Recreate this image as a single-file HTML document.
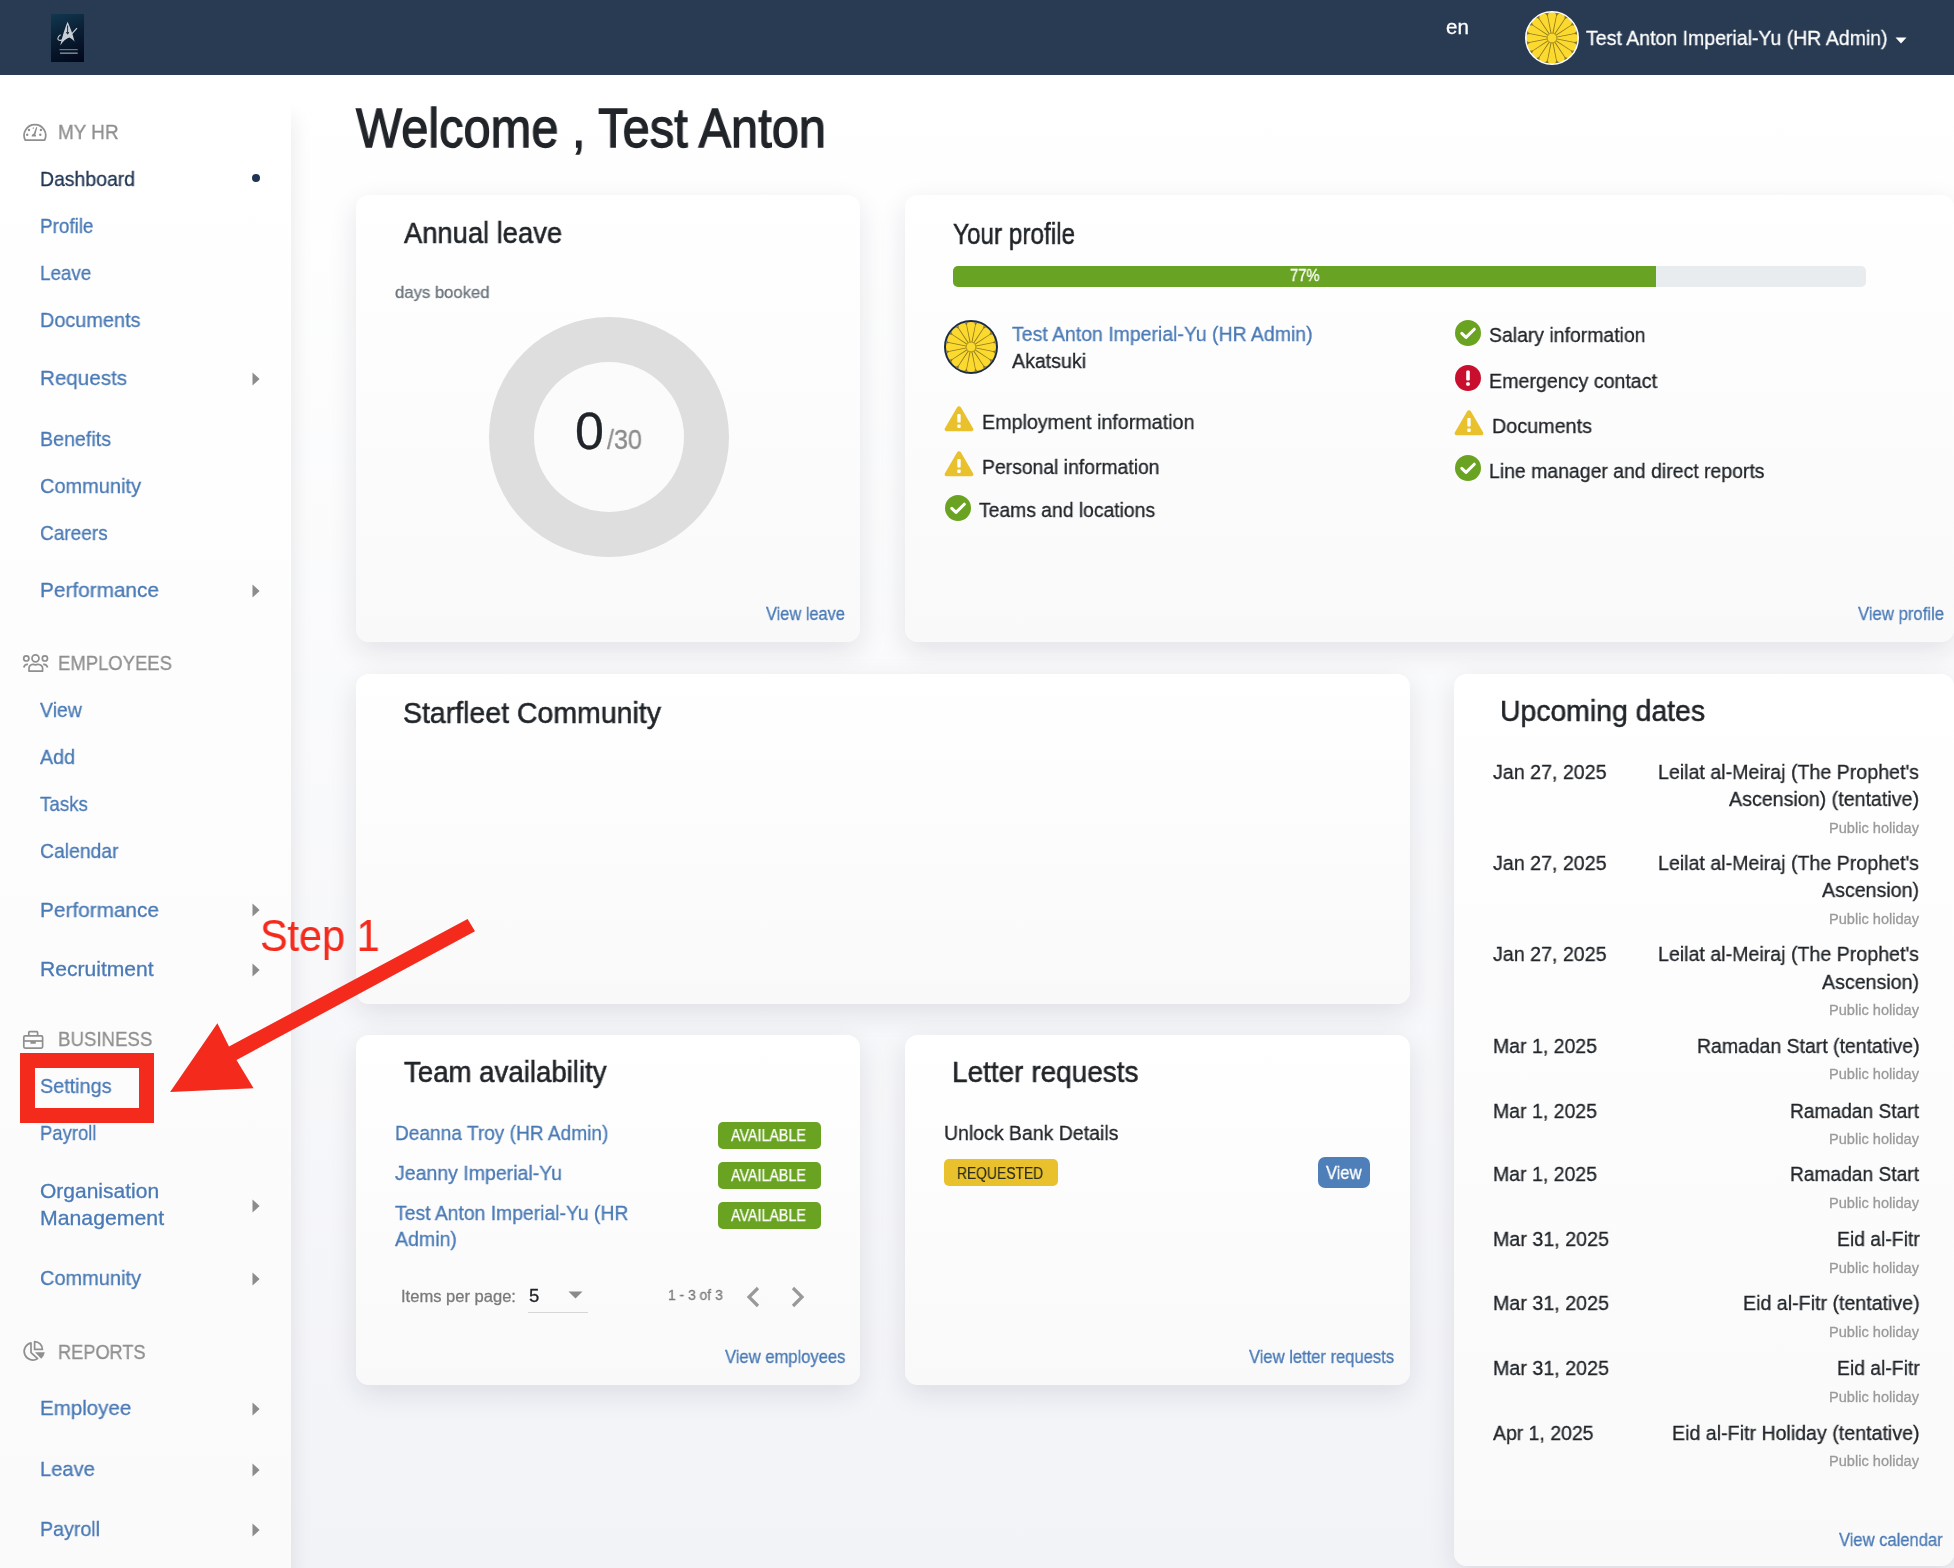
<!DOCTYPE html>
<html><head><meta charset="utf-8"><title>Dashboard</title>
<style>
html,body{margin:0;padding:0;}
body{width:1954px;height:1568px;overflow:hidden;position:relative;background:linear-gradient(#ffffff 80px,#f2f3f7 1568px);font-family:"Liberation Sans",sans-serif;}
.t{position:absolute;line-height:0;white-space:nowrap;will-change:transform;-webkit-text-stroke-width:0.3px;}
.card{position:absolute;border-radius:13px;background:linear-gradient(#ffffff,#f9f9fa);box-shadow:0 9px 28px rgba(30,30,55,0.105);}
.hdr{position:absolute;left:0;top:0;width:1954px;height:75px;background:#283b53;}
.side{position:absolute;left:0;top:96px;width:291px;height:1500px;border-top-right-radius:12px;background:linear-gradient(#ffffff,#fafafb);box-shadow:10px 14px 20px -8px rgba(30,30,55,0.09);}
.badge{position:absolute;border-radius:5px;}
</style></head><body>
<div class="hdr"></div>
<div style="position:absolute;left:51px;top:14px;width:33px;height:48px;background:linear-gradient(160deg,#11384f 0%,#0a1e33 45%,#02071a 100%);"></div>
<svg style="position:absolute;left:51px;top:14px" width="33" height="48" viewBox="0 0 33 48">
<path d="M16.6 7.8 C14.2 13.5 11.3 22.5 9.3 31.4 C12 27.2 15 24.6 18.3 23.6 C20.3 24.4 22 25.8 23.6 27.7 C21.8 20.5 19.2 13.2 16.6 7.8Z" fill="#c9ced6"/>
<path d="M16.6 11.5 L16.6 19.5 M15.4 18 L16.6 20.2 L17.8 18" fill="none" stroke="#0b1d30" stroke-width="0.9"/>
<path d="M9.6 20.8 C6.2 23 5.6 26.6 9.6 26.4 C14.5 26 20.5 20.8 26 14.2" fill="none" stroke="#c9ced6" stroke-width="1.1"/>
<rect x="8.5" y="35.1" width="18.2" height="1.1" fill="#76808c"/><rect x="9" y="38.4" width="17.7" height="1.6" fill="#76808c"/>
</svg>
<svg style="position:absolute;left:1525px;top:11px" width="54" height="54" viewBox="0 0 54 54"><circle cx="27" cy="27" r="25.4" fill="#8c7a1e"/><path d="M31.58 26.59 L49.23 22.94 A4.06 4.06 0 0 1 49.23 31.06 L31.58 27.41 Z" fill="#fcd92f"/><path d="M31.39 28.37 L49.09 31.76 A4.06 4.06 0 0 1 45.99 39.26 L31.07 29.14 Z" fill="#fcd92f"/><path d="M30.53 29.95 L45.59 39.85 A4.06 4.06 0 0 1 39.85 45.59 L29.95 30.53 Z" fill="#fcd92f"/><path d="M29.14 31.07 L39.26 45.99 A4.06 4.06 0 0 1 31.76 49.09 L28.37 31.39 Z" fill="#fcd92f"/><path d="M27.41 31.58 L31.06 49.23 A4.06 4.06 0 0 1 22.94 49.23 L26.59 31.58 Z" fill="#fcd92f"/><path d="M25.63 31.39 L22.24 49.09 A4.06 4.06 0 0 1 14.74 45.99 L24.86 31.07 Z" fill="#fcd92f"/><path d="M24.05 30.53 L14.15 45.59 A4.06 4.06 0 0 1 8.41 39.85 L23.47 29.95 Z" fill="#fcd92f"/><path d="M22.93 29.14 L8.01 39.26 A4.06 4.06 0 0 1 4.91 31.76 L22.61 28.37 Z" fill="#fcd92f"/><path d="M22.42 27.41 L4.77 31.06 A4.06 4.06 0 0 1 4.77 22.94 L22.42 26.59 Z" fill="#fcd92f"/><path d="M22.61 25.63 L4.91 22.24 A4.06 4.06 0 0 1 8.01 14.74 L22.93 24.86 Z" fill="#fcd92f"/><path d="M23.47 24.05 L8.41 14.15 A4.06 4.06 0 0 1 14.15 8.41 L24.05 23.47 Z" fill="#fcd92f"/><path d="M24.86 22.93 L14.74 8.01 A4.06 4.06 0 0 1 22.24 4.91 L25.63 22.61 Z" fill="#fcd92f"/><path d="M26.59 22.42 L22.94 4.77 A4.06 4.06 0 0 1 31.06 4.77 L27.41 22.42 Z" fill="#fcd92f"/><path d="M28.37 22.61 L31.76 4.91 A4.06 4.06 0 0 1 39.26 8.01 L29.14 22.93 Z" fill="#fcd92f"/><path d="M29.95 23.47 L39.85 8.41 A4.06 4.06 0 0 1 45.59 14.15 L30.53 24.05 Z" fill="#fcd92f"/><path d="M31.07 24.86 L45.99 14.74 A4.06 4.06 0 0 1 49.09 22.24 L31.39 25.63 Z" fill="#fcd92f"/><circle cx="27" cy="27" r="4.9" fill="#fcd92f" stroke="#9c8a1c" stroke-width="0.8"/><circle cx="27" cy="27" r="26.2" fill="none" stroke="#ffffff" stroke-width="1.6"/></svg>
<svg style="position:absolute;left:1895px;top:37px" width="12" height="7" viewBox="0 0 12 7"><path d="M0.5 0.5 L11.5 0.5 L6 6.5Z" fill="#fff"/></svg>
<div class="side"></div>
<div style="position:absolute;left:252px;top:174px;width:8px;height:8px;border-radius:50%;background:#1f3553;"></div>
<svg style="position:absolute;left:17px;top:117px" width="36" height="30" viewBox="0 0 36 30"><g fill="none" stroke="#8f8f8f" stroke-width="1.7"><path d="M8.2 23.2 A 10.8 10.8 0 1 1 27.6 23.2 Z" stroke-linejoin="round"/></g><g fill="#8f8f8f"><circle cx="12" cy="13" r="1.2"/><circle cx="10.2" cy="17.8" r="1.2"/><circle cx="23.9" cy="13" r="1.2"/><circle cx="23.3" cy="17.8" r="1.2"/><path d="M16 10.2 L16.9 10.4 L16.5 12 L15.6 11.8Z"/><path d="M19.2 10 L20.3 10.4 L18.4 17.6 Q19.3 18.3 18.9 19.6 L14.6 19.6 Q14.4 17.6 16.6 16.8Z"/></g></svg>
<svg style="position:absolute;left:18px;top:648px" width="36" height="30" viewBox="0 0 36 30"><g fill="none" stroke="#8f8f8f" stroke-width="1.7"><circle cx="17.5" cy="10.3" r="3.5"/><circle cx="8.3" cy="10.4" r="2.6"/><circle cx="26.9" cy="10.4" r="2.6"/><path d="M11 23.1 L11 20.5 Q11 16.5 15 16.3 Q17.5 17.4 20 16.3 Q24.6 16.5 24.6 20.5 L24.6 23.1 Z" stroke-linejoin="round"/><path d="M5.8 19.5 Q6.5 16 10 16.4"/><path d="M25.2 16.4 Q28.7 16 29.6 19.5"/></g></svg>
<svg style="position:absolute;left:18px;top:1025px" width="36" height="30" viewBox="0 0 36 30"><g fill="none" stroke="#8f8f8f" stroke-width="1.7"><rect x="5.8" y="10.9" width="18.8" height="12.2" rx="1.3"/><path d="M10.8 10.9 L10.8 7.5 Q10.8 6.7 11.6 6.7 L18.8 6.7 Q19.6 6.7 19.6 7.5 L19.6 10.9"/><path d="M5.8 16 L24.6 16"/></g><rect x="12.4" y="16" width="5.4" height="2.8" rx="0.6" fill="#8f8f8f"/></svg>
<svg style="position:absolute;left:18px;top:1335px" width="36" height="30" viewBox="0 0 36 30"><g fill="none" stroke="#8f8f8f" stroke-width="1.7"><path d="M13 7.8 A 8.7 8.7 0 1 0 19.6 23.6 L13 17.6 Z" stroke-linejoin="round"/><path d="M16.6 6.6 L16.6 14.4 L24.4 14.4 A 7.8 7.8 0 0 0 16.6 6.6 Z" stroke-linejoin="round"/></g><path d="M17 17.3 L26.8 17.3 Q26.2 21 23.2 23.8 Z" fill="#8f8f8f"/></svg>
<div class="card" style="left:356px;top:195px;width:504px;height:447px;"></div>
<div class="card" style="left:905px;top:195px;width:1049px;height:447px;"></div>
<div class="card" style="left:356px;top:674px;width:1054px;height:330px;"></div>
<div class="card" style="left:1454px;top:674px;width:500px;height:892px;"></div>
<div class="card" style="left:356px;top:1035px;width:504px;height:350px;"></div>
<div class="card" style="left:905px;top:1035px;width:505px;height:350px;"></div>
<!-- donut -->
<div style="position:absolute;left:488.5px;top:317px;width:240px;height:240px;border-radius:50%;background:#dedede;"></div>
<div style="position:absolute;left:533.5px;top:362px;width:150px;height:150px;border-radius:50%;background:#fbfbfb;"></div>
<!-- progress -->
<div style="position:absolute;left:953px;top:266px;width:913px;height:21px;border-radius:5px;background:#e9ecef;overflow:hidden;"><div style="width:703px;height:21px;background:#69a323;"></div></div>
<svg style="position:absolute;left:944px;top:320px" width="54" height="54" viewBox="0 0 54 54"><circle cx="27" cy="27" r="25" fill="#8c7a1e"/><path d="M31.58 26.59 L48.84 23.01 A3.99 3.99 0 0 1 48.84 30.99 L31.58 27.41 Z" fill="#fcd92f"/><path d="M31.39 28.37 L48.70 31.67 A3.99 3.99 0 0 1 45.65 39.04 L31.07 29.14 Z" fill="#fcd92f"/><path d="M30.53 29.95 L45.26 39.62 A3.99 3.99 0 0 1 39.62 45.26 L29.95 30.53 Z" fill="#fcd92f"/><path d="M29.14 31.07 L39.04 45.65 A3.99 3.99 0 0 1 31.67 48.70 L28.37 31.39 Z" fill="#fcd92f"/><path d="M27.41 31.58 L30.99 48.84 A3.99 3.99 0 0 1 23.01 48.84 L26.59 31.58 Z" fill="#fcd92f"/><path d="M25.63 31.39 L22.33 48.70 A3.99 3.99 0 0 1 14.96 45.65 L24.86 31.07 Z" fill="#fcd92f"/><path d="M24.05 30.53 L14.38 45.26 A3.99 3.99 0 0 1 8.74 39.62 L23.47 29.95 Z" fill="#fcd92f"/><path d="M22.93 29.14 L8.35 39.04 A3.99 3.99 0 0 1 5.30 31.67 L22.61 28.37 Z" fill="#fcd92f"/><path d="M22.42 27.41 L5.16 30.99 A3.99 3.99 0 0 1 5.16 23.01 L22.42 26.59 Z" fill="#fcd92f"/><path d="M22.61 25.63 L5.30 22.33 A3.99 3.99 0 0 1 8.35 14.96 L22.93 24.86 Z" fill="#fcd92f"/><path d="M23.47 24.05 L8.74 14.38 A3.99 3.99 0 0 1 14.38 8.74 L24.05 23.47 Z" fill="#fcd92f"/><path d="M24.86 22.93 L14.96 8.35 A3.99 3.99 0 0 1 22.33 5.30 L25.63 22.61 Z" fill="#fcd92f"/><path d="M26.59 22.42 L23.01 5.16 A3.99 3.99 0 0 1 30.99 5.16 L27.41 22.42 Z" fill="#fcd92f"/><path d="M28.37 22.61 L31.67 5.30 A3.99 3.99 0 0 1 39.04 8.35 L29.14 22.93 Z" fill="#fcd92f"/><path d="M29.95 23.47 L39.62 8.74 A3.99 3.99 0 0 1 45.26 14.38 L30.53 24.05 Z" fill="#fcd92f"/><path d="M31.07 24.86 L45.65 14.96 A3.99 3.99 0 0 1 48.70 22.33 L31.39 25.63 Z" fill="#fcd92f"/><circle cx="27" cy="27" r="4.9" fill="#fcd92f" stroke="#9c8a1c" stroke-width="0.8"/><circle cx="27" cy="27" r="26" fill="none" stroke="#1d2d44" stroke-width="2"/></svg>
<!-- badges -->
<div class="badge" style="left:718px;top:1122px;width:103px;height:27px;background:#6aa321;"></div>
<div class="badge" style="left:718px;top:1162px;width:103px;height:27px;background:#6aa321;"></div>
<div class="badge" style="left:718px;top:1202px;width:103px;height:27px;background:#6aa321;"></div>
<div class="badge" style="left:944px;top:1159px;width:114px;height:27px;background:#e9c12d;"></div>
<div class="badge" style="left:1318px;top:1157px;width:52px;height:31px;border-radius:7px;background:#4f7fb9;"></div>
<!-- paginator -->
<div style="position:absolute;left:528px;top:1311.5px;width:60px;height:1.5px;background:#d6d6d6;"></div>
<svg style="position:absolute;left:568px;top:1291px" width="15" height="8" viewBox="0 0 15 8"><path d="M0.5 0.5 L14.5 0.5 L7.5 7.5Z" fill="#8a8a8a"/></svg>
<svg style="position:absolute;left:745px;top:1286px" width="16" height="22" viewBox="0 0 16 22"><path d="M13 2 L4 11 L13 20" fill="none" stroke="#999" stroke-width="3.2"/></svg>
<svg style="position:absolute;left:790px;top:1286px" width="16" height="22" viewBox="0 0 16 22"><path d="M3 2 L12 11 L3 20" fill="none" stroke="#999" stroke-width="3.2"/></svg>
<svg style="position:absolute;left:252px;top:371.5px" width="8" height="14" viewBox="0 0 8 14"><path d="M0.5 0.5 L7.6 7 L0.5 13.5Z" fill="#8c8c8c"/></svg>
<svg style="position:absolute;left:252px;top:583.5px" width="8" height="14" viewBox="0 0 8 14"><path d="M0.5 0.5 L7.6 7 L0.5 13.5Z" fill="#8c8c8c"/></svg>
<svg style="position:absolute;left:252px;top:903px" width="8" height="14" viewBox="0 0 8 14"><path d="M0.5 0.5 L7.6 7 L0.5 13.5Z" fill="#8c8c8c"/></svg>
<svg style="position:absolute;left:252px;top:962.5px" width="8" height="14" viewBox="0 0 8 14"><path d="M0.5 0.5 L7.6 7 L0.5 13.5Z" fill="#8c8c8c"/></svg>
<svg style="position:absolute;left:252px;top:1198.5px" width="8" height="14" viewBox="0 0 8 14"><path d="M0.5 0.5 L7.6 7 L0.5 13.5Z" fill="#8c8c8c"/></svg>
<svg style="position:absolute;left:252px;top:1271.5px" width="8" height="14" viewBox="0 0 8 14"><path d="M0.5 0.5 L7.6 7 L0.5 13.5Z" fill="#8c8c8c"/></svg>
<svg style="position:absolute;left:252px;top:1401.5px" width="8" height="14" viewBox="0 0 8 14"><path d="M0.5 0.5 L7.6 7 L0.5 13.5Z" fill="#8c8c8c"/></svg>
<svg style="position:absolute;left:252px;top:1462.5px" width="8" height="14" viewBox="0 0 8 14"><path d="M0.5 0.5 L7.6 7 L0.5 13.5Z" fill="#8c8c8c"/></svg>
<svg style="position:absolute;left:252px;top:1522.5px" width="8" height="14" viewBox="0 0 8 14"><path d="M0.5 0.5 L7.6 7 L0.5 13.5Z" fill="#8c8c8c"/></svg>
<svg style="position:absolute;left:943.8px;top:404.8px" width="30" height="27" viewBox="0 0 30 27"><path d="M15 1.2 Q16.2 1.2 17 2.6 L29.2 23.6 Q30 25.2 28.4 26 Q28 26.2 27 26.2 L3 26.2 Q2 26.2 1.6 26 Q0 25.2 0.8 23.6 L13 2.6 Q13.8 1.2 15 1.2Z" fill="#e9c12d"/><rect x="13.3" y="9" width="3.4" height="8.6" rx="1" fill="#fff"/><rect x="13.3" y="19.6" width="3.4" height="3.4" rx="1" fill="#fff"/></svg>
<svg style="position:absolute;left:943.8px;top:449.8px" width="30" height="27" viewBox="0 0 30 27"><path d="M15 1.2 Q16.2 1.2 17 2.6 L29.2 23.6 Q30 25.2 28.4 26 Q28 26.2 27 26.2 L3 26.2 Q2 26.2 1.6 26 Q0 25.2 0.8 23.6 L13 2.6 Q13.8 1.2 15 1.2Z" fill="#e9c12d"/><rect x="13.3" y="9" width="3.4" height="8.6" rx="1" fill="#fff"/><rect x="13.3" y="19.6" width="3.4" height="3.4" rx="1" fill="#fff"/></svg>
<svg style="position:absolute;left:944.8px;top:495px" width="26" height="26" viewBox="0 0 26 26"><circle cx="13" cy="13" r="13" fill="#6aa321"/><path d="M6.8 13.4 L11 17.4 L19.3 9.2" fill="none" stroke="#fff" stroke-width="3" stroke-linecap="round" stroke-linejoin="round"/></svg>
<svg style="position:absolute;left:1455.2px;top:320px" width="26" height="26" viewBox="0 0 26 26"><circle cx="13" cy="13" r="13" fill="#6aa321"/><path d="M6.8 13.4 L11 17.4 L19.3 9.2" fill="none" stroke="#fff" stroke-width="3" stroke-linecap="round" stroke-linejoin="round"/></svg>
<svg style="position:absolute;left:1455.2px;top:365.2px" width="26" height="26" viewBox="0 0 26 26"><circle cx="13" cy="13" r="13" fill="#c8102e"/><rect x="11.2" y="5.5" width="3.6" height="10" rx="1.2" fill="#fff"/><rect x="11.2" y="17.2" width="3.6" height="3.6" rx="1.2" fill="#fff"/></svg>
<svg style="position:absolute;left:1454px;top:409.3px" width="30" height="27" viewBox="0 0 30 27"><path d="M15 1.2 Q16.2 1.2 17 2.6 L29.2 23.6 Q30 25.2 28.4 26 Q28 26.2 27 26.2 L3 26.2 Q2 26.2 1.6 26 Q0 25.2 0.8 23.6 L13 2.6 Q13.8 1.2 15 1.2Z" fill="#e9c12d"/><rect x="13.3" y="9" width="3.4" height="8.6" rx="1" fill="#fff"/><rect x="13.3" y="19.6" width="3.4" height="3.4" rx="1" fill="#fff"/></svg>
<svg style="position:absolute;left:1455.2px;top:455px" width="26" height="26" viewBox="0 0 26 26"><circle cx="13" cy="13" r="13" fill="#6aa321"/><path d="M6.8 13.4 L11 17.4 L19.3 9.2" fill="none" stroke="#fff" stroke-width="3" stroke-linecap="round" stroke-linejoin="round"/></svg>
<div class="t" style="top:26.89px;font-size:20.50px;color:#fff;left:1446.20px;">en</div>
<div class="t" style="top:38.42px;font-size:21.00px;color:#fff;left:1586.20px;transform:scaleX(0.9293);transform-origin:0 0;">Test Anton Imperial-Yu (HR Admin)</div>
<div class="t" style="top:178.72px;font-size:21.00px;color:#1f3553;left:40.20px;transform:scaleX(0.9251);transform-origin:0 0;">Dashboard</div>
<div class="t" style="top:225.72px;font-size:21.00px;color:#4a7ab5;left:40.20px;transform:scaleX(0.8986);transform-origin:0 0;">Profile</div>
<div class="t" style="top:272.72px;font-size:21.00px;color:#4a7ab5;left:40.20px;transform:scaleX(0.8965);transform-origin:0 0;">Leave</div>
<div class="t" style="top:319.72px;font-size:21.00px;color:#4a7ab5;left:40.20px;transform:scaleX(0.9458);transform-origin:0 0;">Documents</div>
<div class="t" style="top:378.12px;font-size:21.00px;color:#4a7ab5;left:40.20px;transform:scaleX(0.9806);transform-origin:0 0;">Requests</div>
<div class="t" style="top:438.72px;font-size:21.00px;color:#4a7ab5;left:40.20px;transform:scaleX(0.9353);transform-origin:0 0;">Benefits</div>
<div class="t" style="top:485.72px;font-size:21.00px;color:#4a7ab5;left:40.20px;transform:scaleX(0.9514);transform-origin:0 0;">Community</div>
<div class="t" style="top:532.72px;font-size:21.00px;color:#4a7ab5;left:40.20px;transform:scaleX(0.9055);transform-origin:0 0;">Careers</div>
<div class="t" style="top:590.12px;font-size:21.00px;color:#4a7ab5;left:40.20px;transform:scaleX(0.9898);transform-origin:0 0;">Performance</div>
<div class="t" style="top:709.72px;font-size:21.00px;color:#4a7ab5;left:40.20px;transform:scaleX(0.9258);transform-origin:0 0;">View</div>
<div class="t" style="top:756.72px;font-size:21.00px;color:#4a7ab5;left:40.20px;transform:scaleX(0.9363);transform-origin:0 0;">Add</div>
<div class="t" style="top:803.72px;font-size:21.00px;color:#4a7ab5;left:40.20px;transform:scaleX(0.8909);transform-origin:0 0;">Tasks</div>
<div class="t" style="top:851.32px;font-size:21.00px;color:#4a7ab5;left:40.20px;transform:scaleX(0.9219);transform-origin:0 0;">Calendar</div>
<div class="t" style="top:909.72px;font-size:21.00px;color:#4a7ab5;left:40.20px;transform:scaleX(0.9898);transform-origin:0 0;">Performance</div>
<div class="t" style="top:969.22px;font-size:21.00px;color:#4a7ab5;left:40.20px;transform:scaleX(1.0036);transform-origin:0 0;">Recruitment</div>
<div class="t" style="top:1086.32px;font-size:21.00px;color:#4a7ab5;left:40.20px;transform:scaleX(0.9418);transform-origin:0 0;">Settings</div>
<div class="t" style="top:1133.12px;font-size:21.00px;color:#4a7ab5;left:40.20px;transform:scaleX(0.8791);transform-origin:0 0;">Payroll</div>
<div class="t" style="top:1190.92px;font-size:21.00px;color:#4a7ab5;left:40.20px;transform:scaleX(0.9994);transform-origin:0 0;">Organisation</div>
<div class="t" style="top:1217.72px;font-size:21.00px;color:#4a7ab5;left:40.20px;transform:scaleX(1.0120);transform-origin:0 0;">Management</div>
<div class="t" style="top:1278.22px;font-size:21.00px;color:#4a7ab5;left:40.20px;transform:scaleX(0.9514);transform-origin:0 0;">Community</div>
<div class="t" style="top:1408.42px;font-size:21.00px;color:#4a7ab5;left:40.20px;transform:scaleX(0.9770);transform-origin:0 0;">Employee</div>
<div class="t" style="top:1469.32px;font-size:21.00px;color:#4a7ab5;left:40.20px;transform:scaleX(0.9594);transform-origin:0 0;">Leave</div>
<div class="t" style="top:1529.42px;font-size:21.00px;color:#4a7ab5;left:40.20px;transform:scaleX(0.9352);transform-origin:0 0;">Payroll</div>
<div class="t" style="top:131.89px;font-size:20.50px;color:#8f8f8f;left:58.20px;transform:scaleX(0.9208);transform-origin:0 0;">MY HR</div>
<div class="t" style="top:662.89px;font-size:20.50px;color:#8f8f8f;left:58.20px;transform:scaleX(0.9013);transform-origin:0 0;">EMPLOYEES</div>
<div class="t" style="top:1038.89px;font-size:20.50px;color:#8f8f8f;left:58.20px;transform:scaleX(0.9100);transform-origin:0 0;">BUSINESS</div>
<div class="t" style="top:1351.59px;font-size:20.50px;color:#8f8f8f;left:58.20px;transform:scaleX(0.8875);transform-origin:0 0;">REPORTS</div>
<div class="t" style="top:127.93px;font-size:55.00px;color:#212529;left:356.20px;transform:scaleX(0.8869);transform-origin:0 0;-webkit-text-stroke-width:1.3px;">Welcome , Test Anton</div>
<div class="t" style="top:233.17px;font-size:29.50px;color:#212529;left:404.20px;transform:scaleX(0.9266);transform-origin:0 0;-webkit-text-stroke-width:0.55px;">Annual leave</div>
<div class="t" style="top:292.91px;font-size:17.00px;color:#6c757d;left:394.70px;transform:scaleX(0.9804);transform-origin:0 0;">days booked</div>
<div class="t" style="top:430.67px;font-size:52.00px;color:#212529;left:575.20px;">0</div>
<div class="t" style="top:439.69px;font-size:28.00px;color:#8c8c8c;left:607.20px;transform:scaleX(0.8993);transform-origin:0 0;">/30</div>
<div class="t" style="top:613.59px;font-size:18.50px;color:#4a7ab5;left:766.00px;transform:scaleX(0.8859);transform-origin:0 0;">View leave</div>
<div class="t" style="top:234.17px;font-size:29.50px;color:#212529;left:953.20px;transform:scaleX(0.8238);transform-origin:0 0;-webkit-text-stroke-width:0.55px;">Your profile</div>
<div class="t" style="top:276.45px;font-size:16.00px;color:#fff;left:1289.70px;transform:scaleX(0.9219);transform-origin:0 0;">77%</div>
<div class="t" style="top:334.29px;font-size:20.50px;color:#4a7ab5;left:1011.70px;transform:scaleX(0.9488);transform-origin:0 0;">Test Anton Imperial-Yu (HR Admin)</div>
<div class="t" style="top:360.59px;font-size:20.50px;color:#212529;left:1011.70px;transform:scaleX(0.9550);transform-origin:0 0;">Akatsuki</div>
<div class="t" style="top:421.89px;font-size:20.50px;color:#212529;left:981.70px;transform:scaleX(0.9611);transform-origin:0 0;">Employment information</div>
<div class="t" style="top:466.69px;font-size:20.50px;color:#212529;left:981.70px;transform:scaleX(0.9442);transform-origin:0 0;">Personal information</div>
<div class="t" style="top:510.39px;font-size:20.50px;color:#212529;left:978.70px;transform:scaleX(0.9419);transform-origin:0 0;">Teams and locations</div>
<div class="t" style="top:335.49px;font-size:20.50px;color:#212529;left:1488.70px;transform:scaleX(0.9472);transform-origin:0 0;">Salary information</div>
<div class="t" style="top:380.89px;font-size:20.50px;color:#212529;left:1488.70px;transform:scaleX(0.9574);transform-origin:0 0;">Emergency contact</div>
<div class="t" style="top:425.89px;font-size:20.50px;color:#212529;left:1492.20px;transform:scaleX(0.9640);transform-origin:0 0;">Documents</div>
<div class="t" style="top:470.89px;font-size:20.50px;color:#212529;left:1488.70px;transform:scaleX(0.9481);transform-origin:0 0;">Line manager and direct reports</div>
<div class="t" style="top:613.59px;font-size:18.50px;color:#4a7ab5;left:1858.00px;transform:scaleX(0.9027);transform-origin:0 0;">View profile</div>
<div class="t" style="top:713.37px;font-size:29.50px;color:#212529;left:403.20px;transform:scaleX(0.9653);transform-origin:0 0;-webkit-text-stroke-width:0.55px;">Starfleet Community</div>
<div class="t" style="top:711.47px;font-size:29.50px;color:#212529;left:1500.20px;transform:scaleX(0.9618);transform-origin:0 0;-webkit-text-stroke-width:0.55px;">Upcoming dates</div>
<div class="t" style="top:772.09px;font-size:20.50px;color:#212529;left:1493.20px;transform:scaleX(0.9579);transform-origin:0 0;">Jan 27, 2025</div>
<div class="t" style="top:772.09px;font-size:20.50px;color:#212529;left:1658.40px;transform:scaleX(0.9566);transform-origin:0 0;">Leilat al-Meiraj (The Prophet's</div>
<div class="t" style="top:799.29px;font-size:20.50px;color:#212529;left:1729.40px;transform:scaleX(0.9585);transform-origin:0 0;">Ascension) (tentative)</div>
<div class="t" style="top:827.97px;font-size:14.50px;color:#9a9a9a;left:1829.20px;transform:scaleX(1.0060);transform-origin:0 0;">Public holiday</div>
<div class="t" style="top:862.79px;font-size:20.50px;color:#212529;left:1493.20px;transform:scaleX(0.9579);transform-origin:0 0;">Jan 27, 2025</div>
<div class="t" style="top:862.79px;font-size:20.50px;color:#212529;left:1658.40px;transform:scaleX(0.9566);transform-origin:0 0;">Leilat al-Meiraj (The Prophet's</div>
<div class="t" style="top:889.99px;font-size:20.50px;color:#212529;left:1822.40px;transform:scaleX(0.9569);transform-origin:0 0;">Ascension)</div>
<div class="t" style="top:918.67px;font-size:14.50px;color:#9a9a9a;left:1829.20px;transform:scaleX(1.0060);transform-origin:0 0;">Public holiday</div>
<div class="t" style="top:954.49px;font-size:20.50px;color:#212529;left:1493.20px;transform:scaleX(0.9579);transform-origin:0 0;">Jan 27, 2025</div>
<div class="t" style="top:954.49px;font-size:20.50px;color:#212529;left:1658.40px;transform:scaleX(0.9566);transform-origin:0 0;">Leilat al-Meiraj (The Prophet's</div>
<div class="t" style="top:981.69px;font-size:20.50px;color:#212529;left:1822.40px;transform:scaleX(0.9569);transform-origin:0 0;">Ascension)</div>
<div class="t" style="top:1010.37px;font-size:14.50px;color:#9a9a9a;left:1829.20px;transform:scaleX(1.0060);transform-origin:0 0;">Public holiday</div>
<div class="t" style="top:1045.69px;font-size:20.50px;color:#212529;left:1493.20px;transform:scaleX(0.9509);transform-origin:0 0;">Mar 1, 2025</div>
<div class="t" style="top:1045.69px;font-size:20.50px;color:#212529;left:1696.90px;transform:scaleX(0.9479);transform-origin:0 0;">Ramadan Start (tentative)</div>
<div class="t" style="top:1074.37px;font-size:14.50px;color:#9a9a9a;left:1829.20px;transform:scaleX(1.0060);transform-origin:0 0;">Public holiday</div>
<div class="t" style="top:1110.79px;font-size:20.50px;color:#212529;left:1493.20px;transform:scaleX(0.9509);transform-origin:0 0;">Mar 1, 2025</div>
<div class="t" style="top:1110.79px;font-size:20.50px;color:#212529;left:1790.40px;transform:scaleX(0.9357);transform-origin:0 0;">Ramadan Start</div>
<div class="t" style="top:1139.47px;font-size:14.50px;color:#9a9a9a;left:1829.20px;transform:scaleX(1.0060);transform-origin:0 0;">Public holiday</div>
<div class="t" style="top:1174.09px;font-size:20.50px;color:#212529;left:1493.20px;transform:scaleX(0.9509);transform-origin:0 0;">Mar 1, 2025</div>
<div class="t" style="top:1174.09px;font-size:20.50px;color:#212529;left:1790.40px;transform:scaleX(0.9357);transform-origin:0 0;">Ramadan Start</div>
<div class="t" style="top:1202.77px;font-size:14.50px;color:#9a9a9a;left:1829.20px;transform:scaleX(1.0060);transform-origin:0 0;">Public holiday</div>
<div class="t" style="top:1239.19px;font-size:20.50px;color:#212529;left:1493.20px;transform:scaleX(0.9599);transform-origin:0 0;">Mar 31, 2025</div>
<div class="t" style="top:1239.19px;font-size:20.50px;color:#212529;left:1836.70px;transform:scaleX(0.9426);transform-origin:0 0;">Eid al-Fitr</div>
<div class="t" style="top:1267.87px;font-size:14.50px;color:#9a9a9a;left:1829.20px;transform:scaleX(1.0060);transform-origin:0 0;">Public holiday</div>
<div class="t" style="top:1303.29px;font-size:20.50px;color:#212529;left:1493.20px;transform:scaleX(0.9599);transform-origin:0 0;">Mar 31, 2025</div>
<div class="t" style="top:1303.29px;font-size:20.50px;color:#212529;left:1742.70px;transform:scaleX(0.9572);transform-origin:0 0;">Eid al-Fitr (tentative)</div>
<div class="t" style="top:1331.97px;font-size:14.50px;color:#9a9a9a;left:1829.20px;transform:scaleX(1.0060);transform-origin:0 0;">Public holiday</div>
<div class="t" style="top:1368.09px;font-size:20.50px;color:#212529;left:1493.20px;transform:scaleX(0.9599);transform-origin:0 0;">Mar 31, 2025</div>
<div class="t" style="top:1368.09px;font-size:20.50px;color:#212529;left:1836.70px;transform:scaleX(0.9426);transform-origin:0 0;">Eid al-Fitr</div>
<div class="t" style="top:1396.77px;font-size:14.50px;color:#9a9a9a;left:1829.20px;transform:scaleX(1.0060);transform-origin:0 0;">Public holiday</div>
<div class="t" style="top:1432.59px;font-size:20.50px;color:#212529;left:1493.20px;transform:scaleX(0.9482);transform-origin:0 0;">Apr 1, 2025</div>
<div class="t" style="top:1432.59px;font-size:20.50px;color:#212529;left:1671.90px;transform:scaleX(0.9570);transform-origin:0 0;">Eid al-Fitr Holiday (tentative)</div>
<div class="t" style="top:1461.27px;font-size:14.50px;color:#9a9a9a;left:1829.20px;transform:scaleX(1.0060);transform-origin:0 0;">Public holiday</div>
<div class="t" style="top:1539.89px;font-size:18.50px;color:#4a7ab5;left:1839.40px;transform:scaleX(0.8939);transform-origin:0 0;">View calendar</div>
<div class="t" style="top:1072.27px;font-size:29.50px;color:#212529;left:404.20px;transform:scaleX(0.9358);transform-origin:0 0;-webkit-text-stroke-width:0.55px;">Team availability</div>
<div class="t" style="top:1132.89px;font-size:20.50px;color:#4a7ab5;left:394.70px;transform:scaleX(0.9315);transform-origin:0 0;">Deanna Troy (HR Admin)</div>
<div class="t" style="top:1172.89px;font-size:20.50px;color:#4a7ab5;left:394.70px;transform:scaleX(0.9517);transform-origin:0 0;">Jeanny Imperial-Yu</div>
<div class="t" style="top:1212.89px;font-size:20.50px;color:#4a7ab5;left:394.70px;transform:scaleX(0.9437);transform-origin:0 0;">Test Anton Imperial-Yu (HR</div>
<div class="t" style="top:1238.89px;font-size:20.50px;color:#4a7ab5;left:394.70px;transform:scaleX(0.9541);transform-origin:0 0;">Admin)</div>
<div class="t" style="top:1296.48px;font-size:16.50px;color:#7a7a7a;left:400.60px;transform:scaleX(1.0028);transform-origin:0 0;">Items per page:</div>
<div class="t" style="top:1295.99px;font-size:18.50px;color:#212529;left:528.50px;">5</div>
<div class="t" style="top:1295.27px;font-size:14.50px;color:#7a7a7a;left:667.50px;transform:scaleX(0.9563);transform-origin:0 0;">1 - 3 of 3</div>
<div class="t" style="top:1356.59px;font-size:18.50px;color:#4a7ab5;left:724.70px;transform:scaleX(0.8966);transform-origin:0 0;">View employees</div>
<div class="t" style="top:1072.27px;font-size:29.50px;color:#212529;left:952.20px;transform:scaleX(0.9478);transform-origin:0 0;-webkit-text-stroke-width:0.55px;">Letter requests</div>
<div class="t" style="top:1132.89px;font-size:20.50px;color:#212529;left:943.60px;transform:scaleX(0.9505);transform-origin:0 0;">Unlock Bank Details</div>
<div class="t" style="top:936.05px;font-size:44.00px;color:#f42a1d;left:260.20px;transform:scaleX(0.9398);transform-origin:0 0;-webkit-text-stroke-width:0.2px;">Step 1</div>
<div class="t" style="top:1356.59px;font-size:18.50px;color:#4a7ab5;left:1249.40px;transform:scaleX(0.8942);transform-origin:0 0;">View letter requests</div>
<div class="t" style="top:1134.85px;font-size:16.30px;color:#fff;left:731.20px;transform:scaleX(0.8773);transform-origin:0 0;-webkit-text-stroke:0.25px #fff;">AVAILABLE</div>
<div class="t" style="top:1174.85px;font-size:16.30px;color:#fff;left:731.20px;transform:scaleX(0.8773);transform-origin:0 0;-webkit-text-stroke:0.25px #fff;">AVAILABLE</div>
<div class="t" style="top:1214.85px;font-size:16.30px;color:#fff;left:731.20px;transform:scaleX(0.8773);transform-origin:0 0;-webkit-text-stroke:0.25px #fff;">AVAILABLE</div>
<div class="t" style="top:1172.75px;font-size:16.30px;color:#2b2b1f;left:957.20px;transform:scaleX(0.8505);transform-origin:0 0;-webkit-text-stroke:0.15px #2b2b1f;">REQUESTED</div>
<div class="t" style="top:1172.79px;font-size:18.50px;color:#fff;left:1325.70px;transform:scaleX(0.8925);transform-origin:0 0;">View</div>
<!-- annotation -->
<div style="position:absolute;left:20px;top:1053px;width:104px;height:40px;border:15px solid #f42a1d;"></div>
<svg style="position:absolute;left:0;top:0" width="600" height="1200" viewBox="0 0 600 1200">
<path d="M467.6 919.1 L475 931.3 L236.5 1060 L253.6 1088.3 L170.1 1091.9 L217.4 1023.2 L229 1046.5 Z" fill="#f42a1d"/>
</svg>
</body></html>
